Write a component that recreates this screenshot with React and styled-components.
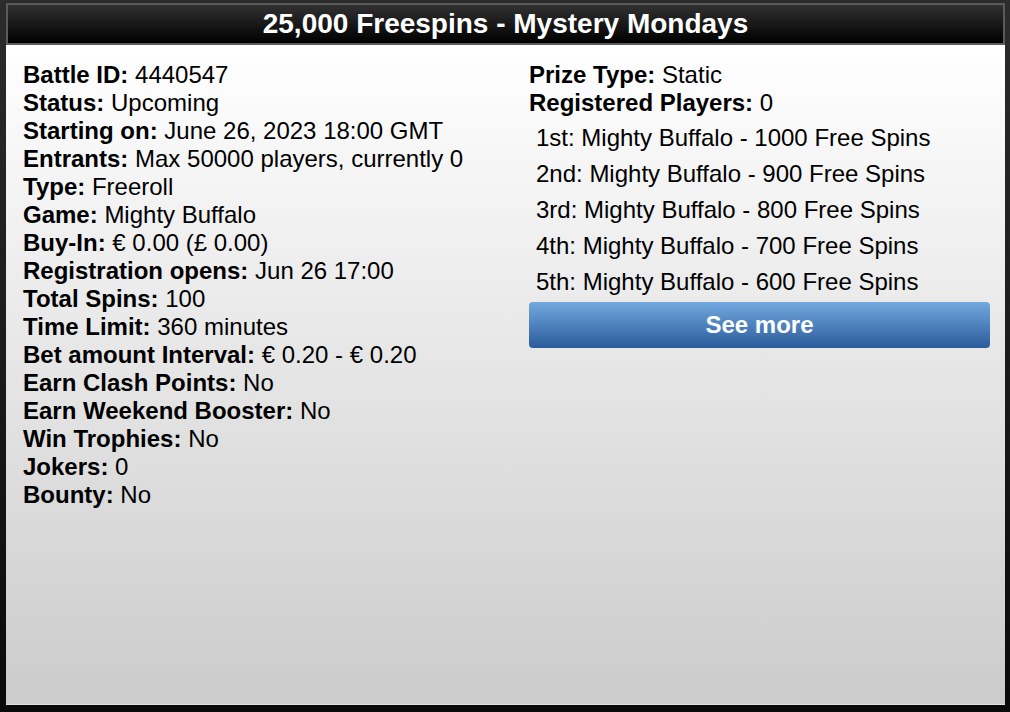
import React from "react";
import styled, { createGlobalStyle } from "styled-components";

const Global = createGlobalStyle`
  html, body { margin: 0; padding: 0; }
  body {
    width: 1010px;
    height: 712px;
    overflow: hidden;
    background: linear-gradient(#2c2c2c, #0a0a0a);
    font-family: "Liberation Sans", Arial, Helvetica, sans-serif;
  }
`;

const Frame = styled.div`
  width: 999px;
  height: 702px;
  margin: 3px 0 0 6px;
  display: flex;
  flex-direction: column;
`;

const Header = styled.h1`
  margin: 0;
  height: 38px;
  border: 2px solid #5a5a5a;
  background: linear-gradient(#313131, #000);
  color: #fff;
  font-size: 28px;
  font-weight: bold;
  line-height: 38px;
  text-align: center;
`;

const Panel = styled.div`
  flex: 1;
  background: linear-gradient(#ffffff, #cbcbcb);
  border-bottom: 1px solid #e2e2e2;
  display: grid;
  grid-template-columns: 506px 1fr;
  padding: 16px 15px 0 17px;
  align-items: start;
  color: #000;
  font-size: 24px;
  line-height: 28px;
`;

const Column = styled.div`
  display: flex;
  flex-direction: column;
`;

const Line = styled.div`
  white-space: nowrap;
`;

const Label = styled.b`
  font-weight: bold;
`;

const PrizeList = styled.ul`
  list-style: none;
  margin: 3px 0 0;
  padding: 0;
`;

const Prize = styled.li`
  padding: 4px 7px;
  white-space: nowrap;
`;

const Button = styled.button`
  margin-top: 2px;
  height: 46px;
  border: none;
  border-radius: 4px;
  background: linear-gradient(#72a9de, #2a5b9b);
  color: #fff;
  font-family: inherit;
  font-size: 24px;
  font-weight: bold;
  cursor: pointer;
`;

const details = [
  ["Battle ID", "4440547"],
  ["Status", "Upcoming"],
  ["Starting on", "June 26, 2023 18:00 GMT"],
  ["Entrants", "Max 50000 players, currently 0"],
  ["Type", "Freeroll"],
  ["Game", "Mighty Buffalo"],
  ["Buy-In", "€ 0.00 (£ 0.00)"],
  ["Registration opens", "Jun 26 17:00"],
  ["Total Spins", "100"],
  ["Time Limit", "360 minutes"],
  ["Bet amount Interval", "€ 0.20 - € 0.20"],
  ["Earn Clash Points", "No"],
  ["Earn Weekend Booster", "No"],
  ["Win Trophies", "No"],
  ["Jokers", "0"],
  ["Bounty", "No"],
];

const prizes = [
  "1st: Mighty Buffalo - 1000 Free Spins",
  "2nd: Mighty Buffalo - 900 Free Spins",
  "3rd: Mighty Buffalo - 800 Free Spins",
  "4th: Mighty Buffalo - 700 Free Spins",
  "5th: Mighty Buffalo - 600 Free Spins",
];

export default function App() {
  return (
    <>
      <Global />
      <Frame>
        <Header>25,000 Freespins - Mystery Mondays</Header>
        <Panel>
          <Column>
            {details.map(([k, v]) => (
              <Line key={k}>
                <Label>{k}:</Label> {v}
              </Line>
            ))}
          </Column>
          <Column>
            <Line>
              <Label>Prize Type:</Label> Static
            </Line>
            <Line>
              <Label>Registered Players:</Label> 0
            </Line>
            <PrizeList>
              {prizes.map((p) => (
                <Prize key={p}>{p}</Prize>
              ))}
            </PrizeList>
            <Button>See more</Button>
          </Column>
        </Panel>
      </Frame>
    </>
  );
}
